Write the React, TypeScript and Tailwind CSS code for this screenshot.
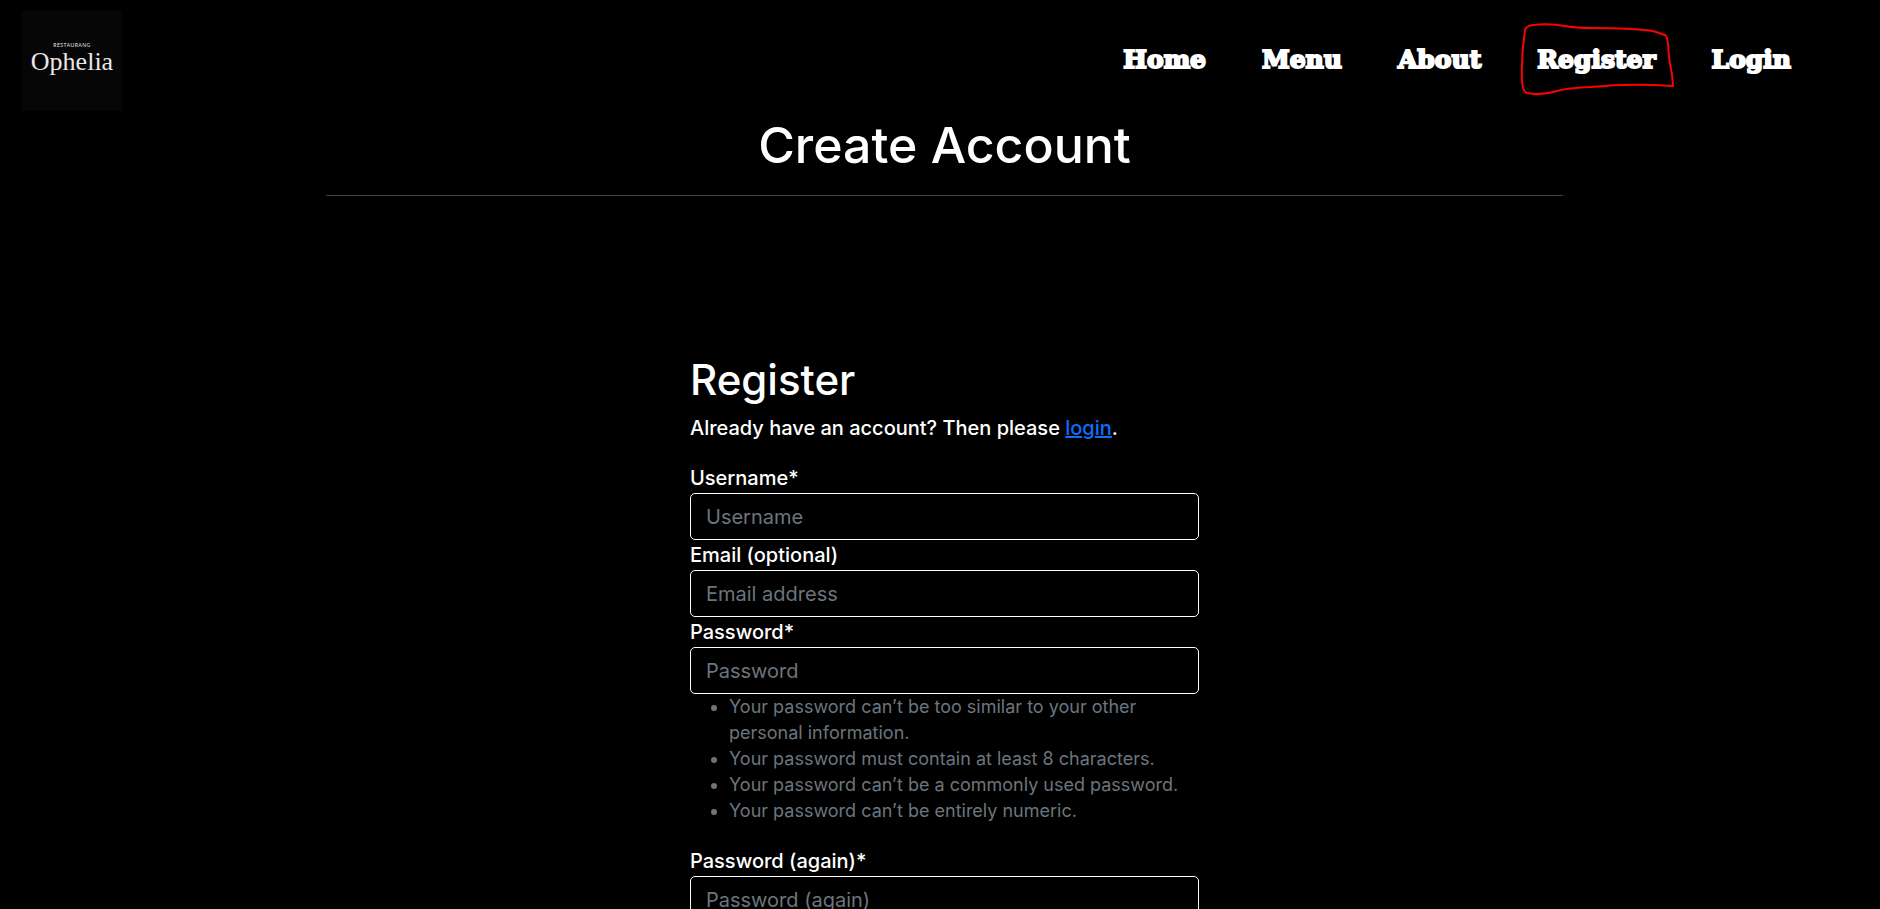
const navItems = ['Home', 'Menu', 'About', 'Register', 'Login'];

const passwordRules = [
  'Your password can’t be too similar to your other personal information.',
  'Your password must contain at least 8 characters.',
  'Your password can’t be a commonly used password.',
  'Your password can’t be entirely numeric.',
];

type FieldProps = {
  id: string;
  label: string;
  placeholder: string;
  type?: string;
};

function Field({ id, label, placeholder, type = 'text' }: FieldProps) {
  return (
    <div>
      <label htmlFor={id} className="block leading-[30px] font-medium">
        {label}
      </label>
      <input
        id={id}
        type={type}
        placeholder={placeholder}
        className="block h-[47px] w-full rounded-[5px] border border-white bg-black px-[15px] text-[20px] text-white placeholder:text-[#6c757d]"
      />
    </div>
  );
}

function Logo() {
  return (
    <a
      href="#"
      aria-label="Restaurang Ophelia"
      className="flex size-[100px] flex-col items-center justify-center bg-[#060606] pb-[4px] text-[#e8e8e8]"
    >
      <span className="font-['Lato',sans-serif] text-[5px] leading-[5px] tracking-widest">RESTAURANG</span>
      <span className="font-['Liberation_Serif',serif] text-[26px] leading-[28px]">Ophelia</span>
    </a>
  );
}

function HandDrawnLoop() {
  return (
    <svg
      viewBox="0 0 156 76"
      className="pointer-events-none absolute -top-[18px] -left-[18px] h-[76px] w-[156px]"
      fill="none"
      stroke="#f00"
      strokeWidth="2"
      strokeLinecap="round"
      strokeLinejoin="round"
      aria-hidden="true"
    >
      <path d="M6 8 Q7 4 14 3 Q30 1 46 4 Q56 6 74 6 Q112 6 134 9 L146 13 Q148 14 149 22 Q150 40 153 52 L154 64 Q112 61 72 65 Q48 66 38 69 Q22 74 8 71 Q4 70 3 60 Q2 34 6 8 Z" />
    </svg>
  );
}

export default function App() {
  return (
    <div className="h-screen overflow-hidden bg-black font-['Inter',sans-serif] text-[20px] text-white">
      <header className="flex items-center justify-between pt-[11px] pr-[89px] pl-[22px]">
        <Logo />
        <nav className="flex gap-[56px] pb-[2px] font-['DejaVu_Serif',serif] text-[25px] leading-[40px] font-bold [-webkit-text-stroke:2px_white]">
          {navItems.map((item) => (
            <a key={item} href="#" className="relative">
              {item}
              {item === 'Register' && <HandDrawnLoop />}
            </a>
          ))}
        </nav>
      </header>

      <main className="pl-[9px]">
        <h1 className="mx-auto w-full max-w-[1237px] border-b border-[#404040] pt-[4px] pb-[20px] text-center text-[50px] leading-[60px] font-medium">
          Create Account
        </h1>

        <section className="mx-auto w-full max-w-[509px] pt-[159px]">
          <h2 className="text-[42px] leading-[50px] font-medium">Register</h2>
          <p className="mt-[8px] leading-[30px] font-medium">
            Already have an account? Then please{' '}
            <a href="#" className="text-[#0d6efd] underline">
              login
            </a>
            .
          </p>

          <form className="mt-[20px]">
            <Field id="username" label="Username*" placeholder="Username" />
            <Field id="email" label="Email (optional)" placeholder="Email address" type="email" />
            <Field id="password" label="Password*" placeholder="Password" type="password" />
            <ul className="mb-[22px] list-disc pl-[39px] text-[18px] leading-[26px] text-[#6c757d]">
              {passwordRules.map((rule) => (
                <li key={rule}>{rule}</li>
              ))}
            </ul>
            <Field id="password-again" label="Password (again)*" placeholder="Password (again)" type="password" />
          </form>
        </section>
      </main>
    </div>
  );
}
